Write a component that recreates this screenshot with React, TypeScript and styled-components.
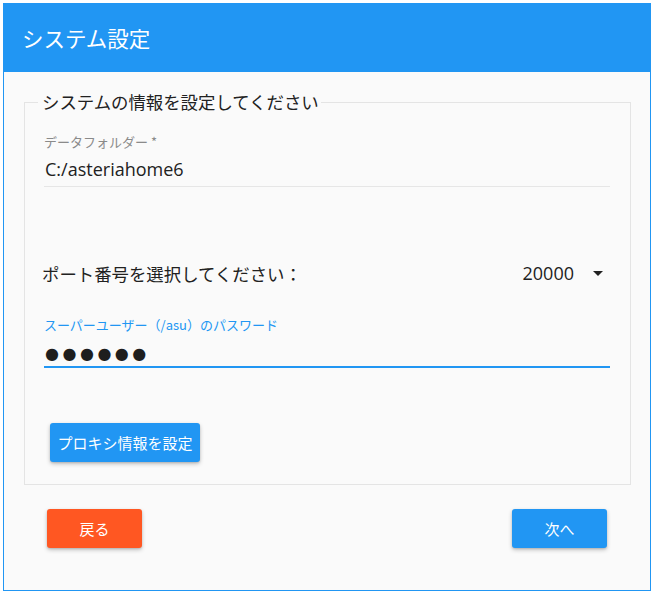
import React from "react";
import styled, { createGlobalStyle } from "styled-components";

const GlobalStyle = createGlobalStyle`
  html, body {
    margin: 0;
    padding: 0;
    background: #ffffff;
  }
  body {
    font-family: "Noto Sans CJK JP", "Noto Sans", sans-serif;
    color: #212121;
  }
`;

const Window = styled.div`
  box-sizing: border-box;
  margin: 3px;
  width: 648px;
  height: 588px;
  border: 1px solid #2196f3;
  background: #fafafa;
  display: flex;
  flex-direction: column;
`;

const Header = styled.div`
  height: 69px;
  margin: -1px -1px 0 -1px;
  background: #2196f3;
  display: flex;
  align-items: center;
  padding-left: 19px;
`;

const Title = styled.h1`
  margin: 0;
  font-size: 21.5px;
  font-weight: 400;
  color: #ffffff;
  line-height: 24px;
`;

const Body = styled.div`
  padding: 20px 19px 0 20px;
  display: flex;
  flex-direction: column;
`;

const Fieldset = styled.fieldset`
  margin: 0;
  min-width: 0;
  border: 1px solid #e4e4e4;
  padding: 0 20px 22px 19px;
  display: flex;
  flex-direction: column;
`;

const Legend = styled.legend`
  margin-left: -6px;
  padding: 0 2px 0 4px;
  font-size: 17.4px;
  line-height: 20px;
  color: #212121;
`;

const Field = styled.div<{ $top: number }>`
  margin-top: ${(p) => p.$top}px;
  display: flex;
  flex-direction: column;
`;

const Label = styled.label<{ $focused?: boolean }>`
  font-size: 13px;
  line-height: 16px;
  color: ${(p) => (p.$focused ? "#2196f3" : "#8a8a8a")};
`;

const Value = styled.div<{ $focused?: boolean }>`
  margin-top: ${(p) => (p.$focused ? 5 : 2)}px;
  height: ${(p) => (p.$focused ? 28 : 34)}px;
  line-height: ${(p) => (p.$focused ? 28 : 34)}px;
  padding-left: 1px;
  font-family: "Open Sans", "Noto Sans CJK JP", sans-serif;
  font-size: 18px;
  color: #212121;
  border-bottom: ${(p) => (p.$focused ? "2px solid #2196f3" : "1px solid #e6e6e6")};
`;

const Dots = styled.span`
  font-family: "DejaVu Sans", sans-serif;
  font-size: 16px;
  letter-spacing: 3.5px;
  color: #1e1e1e;
`;

const SelectRow = styled.div`
  margin-top: 62px;
  height: 48px;
  display: flex;
  align-items: center;
  justify-content: space-between;
`;

const SelectLabel = styled.span`
  font-size: 17.4px;
  margin-left: -2px;
  color: #212121;
`;

const Select = styled.div`
  display: flex;
  align-items: center;
  gap: 12px;
  font-family: "Open Sans", "Noto Sans CJK JP", sans-serif;
  font-size: 18px;
  color: #212121;
`;

const Button = styled.button<{ $color: string; $width: number }>`
  box-sizing: border-box;
  width: ${(p) => p.$width}px;
  height: 39px;
  border: none;
  border-radius: 3px;
  background: ${(p) => p.$color};
  color: #ffffff;
  font-family: "Noto Sans CJK JP", sans-serif;
  font-size: 15px;
  padding: 0;
  box-shadow: 0 2px 4px rgba(0, 0, 0, 0.22), 0 1px 2px rgba(0, 0, 0, 0.12);
  cursor: pointer;
`;

const ProxyWrap = styled.div`
  margin-top: 55px;
  margin-left: 6px;
`;

const Actions = styled.div`
  margin-top: 24px;
  padding: 0 24px 0 23px;
  display: flex;
  justify-content: space-between;
`;

function ArrowDropDown() {
  return (
    <svg width="24" height="24" viewBox="0 0 24 24" style={{ display: "block" }}>
      <path d="M7 10l5 5 5-5z" fill="#212121" />
    </svg>
  );
}

export default function App() {
  return (
    <>
      <GlobalStyle />
      <Window>
        <Header>
          <Title>システム設定</Title>
        </Header>
        <Body>
          <Fieldset>
            <Legend>システムの情報を設定してください</Legend>
            <Field $top={22}>
              <Label>データフォルダー *</Label>
              <Value>C:/asteriahome6</Value>
            </Field>
            <SelectRow>
              <SelectLabel>ポート番号を選択してください：</SelectLabel>
              <Select>
                <span>20000</span>
                <ArrowDropDown />
              </Select>
            </SelectRow>
            <Field $top={20}>
              <Label $focused>スーパーユーザー（/asu）のパスワード</Label>
              <Value $focused>
                <Dots>●●●●●●</Dots>
              </Value>
            </Field>
            <ProxyWrap>
              <Button $color="#2196f3" $width={150}>
                プロキシ情報を設定
              </Button>
            </ProxyWrap>
          </Fieldset>
          <Actions>
            <Button $color="#ff5722" $width={95}>
              戻る
            </Button>
            <Button $color="#2196f3" $width={95}>
              次へ
            </Button>
          </Actions>
        </Body>
      </Window>
    </>
  );
}
